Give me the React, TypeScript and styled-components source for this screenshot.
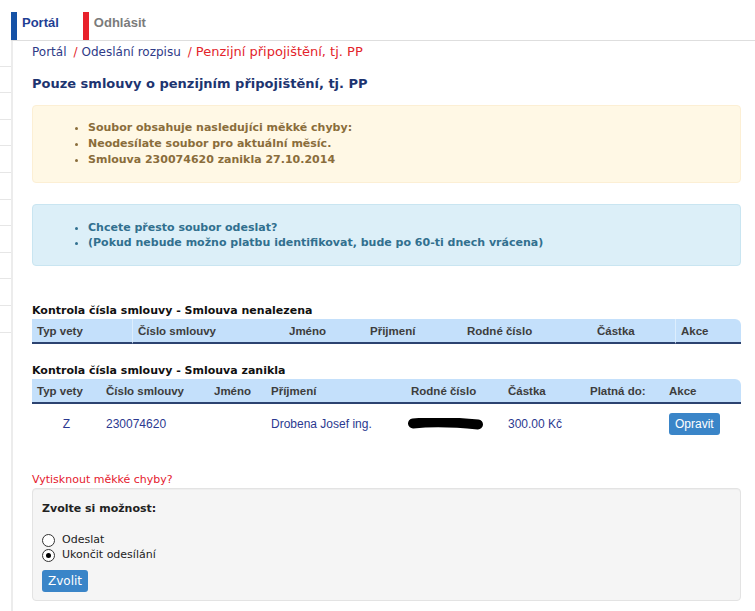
import React from "react";
import styled, { createGlobalStyle } from "styled-components";

const GlobalStyle = createGlobalStyle`
  html, body { margin: 0; padding: 0; background: #ffffff; }
  body {
    font-family: "DejaVu Sans", Verdana, sans-serif;
    font-size: 12px;
    color: #333333;
  }
  * { box-sizing: border-box; }
`;

const Page = styled.div`
  display: flex;
  min-height: 611px;
`;

const Sidebar = styled.aside`
  width: 11px;
  flex: none;
  padding-top: 40px;
  display: flex;
  flex-direction: column;
`;

const SideItem = styled.div`
  height: 26.6px;
  border-bottom: 1px solid #e6e6e6;
`;

const Main = styled.div`
  flex: 1;
  min-width: 0;
  display: flex;
  flex-direction: column;
`;

const TopNav = styled.nav`
  height: 41px;
  border-bottom: 1px solid #dedede;
  display: flex;
  align-items: flex-end;
`;

const Tab = styled.a<{ $bar: string; $color: string }>`
  height: 28px;
  border-left: 6px solid ${(p) => p.$bar};
  padding: 3px 24px 0 5px;
  font: bold 13px/15px "Liberation Sans", Arial, sans-serif;
  color: ${(p) => p.$color};
  text-decoration: none;
`;

const Content = styled.main`
  flex: 1;
  border-left: 2px solid #ececec;
  padding: 3px 14px 8px 19px;
`;

const Crumbs = styled.div`
  display: flex;
  align-items: baseline;
  height: 16px;
  line-height: 16px;
  white-space: nowrap;
`;

const Crumb = styled.a<{ $current?: boolean }>`
  font-size: ${(p) => (p.$current ? "13px" : "12px")};
  color: ${(p) => (p.$current ? "#e3242b" : "#2e3a87")};
  text-decoration: none;
  margin-right: 7px;
`;

const Slash = styled.span`
  color: #e3242b;
  margin-right: 4px;
`;

const Title = styled.h1`
  margin: 16px 0 13px;
  font-size: 13px;
  line-height: 16px;
  font-weight: bold;
  color: #1d3470;
`;

const Alert = styled.div<{ $bg: string; $border: string; $color: string; $lh: number; $pad: number }>`
  background: ${(p) => p.$bg};
  border: 1px solid ${(p) => p.$border};
  border-radius: 4px;
  padding: ${(p) => p.$pad}px 15px;
  margin-bottom: 21px;
  color: ${(p) => p.$color};
  font-size: 11px;
  font-weight: bold;
  line-height: ${(p) => p.$lh}px;
`;

const AlertList = styled.ul`
  margin: 0;
  padding-left: 40px;
`;

const SectionTitle = styled.h3<{ $top: number }>`
  margin: ${(p) => p.$top}px 0 1px;
  font-size: 11px;
  line-height: 14px;
  font-weight: bold;
  color: #111111;
`;

const Grid = styled.table`
  width: 100%;
  table-layout: fixed;
  border-collapse: separate;
  border-spacing: 0;
  font-family: "Liberation Sans", Arial, sans-serif;
  font-size: 12px;
`;

const Col = styled.col<{ $w: number }>`
  width: ${(p) => p.$w}px;
`;

const HeadCell = styled.th<{ $sep?: boolean }>`
  height: 25px;
  padding: 0 5px;
  background: #c4e0fb;
  border-bottom: 2px solid #2c4370;
  border-left: ${(p) => (p.$sep ? "1px solid #ddeefd" : "0")};
  text-align: left;
  font-size: 11.5px;
  font-weight: bold;
  color: #3d3d3d;
  white-space: nowrap;
  &:last-child {
    border-top-right-radius: 6px;
  }
`;

const Cell = styled.td<{ $center?: boolean }>`
  height: 40px;
  padding: 0 5px;
  color: #2b3990;
  text-align: ${(p) => (p.$center ? "center" : "left")};
  white-space: nowrap;
  vertical-align: middle;
`;

const Redacted = styled.svg`
  display: block;
  margin-left: -3px;
`;

const SmallButton = styled.button`
  height: 22px;
  padding: 0 6px;
  border: 0;
  border-radius: 3px;
  background: #3a85c8;
  color: #ffffff;
  font: 12px "Liberation Sans", Arial, sans-serif;
  cursor: pointer;
`;

const PrintLink = styled.a`
  display: block;
  margin-top: 30px;
  margin-bottom: 2px;
  font-size: 11px;
  line-height: 12px;
  color: #e5202e;
  text-decoration: none;
`;

const Well = styled.form`
  background: #f5f5f5;
  border: 1px solid #e3e3e3;
  border-radius: 4px;
  padding: 13px 9px 8px;
  box-shadow: inset 0 1px 1px rgba(0, 0, 0, 0.03);
`;

const WellTitle = styled.div`
  font-size: 11px;
  line-height: 14px;
  font-weight: bold;
  color: #222222;
`;

const Options = styled.div`
  margin-top: 16px;
  display: flex;
  flex-direction: column;
`;

const Option = styled.label`
  display: flex;
  align-items: center;
  height: 15px;
  font-size: 11px;
  color: #222222;
`;

const Radio = styled.input`
  appearance: none;
  width: 13px;
  height: 13px;
  margin: 2px 7px 0 0;
  border: 1px solid #333333;
  border-radius: 50%;
  background: #ffffff;
  display: grid;
  place-items: center;
  &:checked::after {
    content: "";
    width: 5px;
    height: 5px;
    border-radius: 50%;
    background: #000000;
  }
`;

const SubmitButton = styled.button`
  margin-top: 8px;
  height: 22px;
  padding: 0 6px;
  border: 0;
  border-radius: 3px;
  background: #3a85c8;
  color: #ffffff;
  font: 12px "DejaVu Sans", Verdana, sans-serif;
  cursor: pointer;
`;

const table1Cols = [
  { label: "Typ vety", w: 100 },
  { label: "Číslo smlouvy", w: 152, sep: true },
  { label: "Jméno", w: 81 },
  { label: "Přijmení", w: 97 },
  { label: "Rodné číslo", w: 130 },
  { label: "Částka", w: 83 },
  { label: "Akce", w: 66, sep: true },
];

const table2Cols = [
  { label: "Typ vety", w: 69 },
  { label: "Číslo smlouvy", w: 108 },
  { label: "Jméno", w: 57 },
  { label: "Příjmení", w: 140 },
  { label: "Rodné číslo", w: 97 },
  { label: "Částka", w: 82 },
  { label: "Platná do:", w: 79 },
  { label: "Akce", w: 77 },
];

export default function App() {
  return (
    <>
      <GlobalStyle />
      <Page>
        <Sidebar>
          {Array.from({ length: 11 }).map((_, i) => (
            <SideItem key={i} />
          ))}
        </Sidebar>
        <Main>
          <TopNav>
            <Tab $bar="#1552a6" $color="#1f3f94" href="#">
              Portál
            </Tab>
            <Tab $bar="#e8212b" $color="#7b7b7b" href="#">
              Odhlásit
            </Tab>
          </TopNav>
          <Content>
            <Crumbs>
              <Crumb href="#">Portál</Crumb>
              <Slash>/</Slash>
              <Crumb href="#">Odeslání rozpisu</Crumb>
              <Slash>/</Slash>
              <Crumb $current>Penzijní připojištění, tj. PP</Crumb>
            </Crumbs>
            <Title>Pouze smlouvy o penzijním připojištění, tj. PP</Title>

            <Alert $bg="#fff8e5" $border="#fcefd4" $color="#8a6d3b" $lh={16} $pad={14}>
              <AlertList>
                <li>Soubor obsahuje nasledujíci měkké chyby:</li>
                <li>Neodesílate soubor pro aktuální měsíc.</li>
                <li>Smlouva 230074620 zanikla 27.10.2014</li>
              </AlertList>
            </Alert>

            <Alert $bg="#dceff8" $border="#c9e5f1" $color="#31708f" $lh={15} $pad={15}>
              <AlertList>
                <li>Chcete přesto soubor odeslat?</li>
                <li>(Pokud nebude možno platbu identifikovat, bude po 60-ti dnech vrácena)</li>
              </AlertList>
            </Alert>

            <SectionTitle $top={38}>Kontrola čísla smlouvy - Smlouva nenalezena</SectionTitle>
            <Grid>
              <colgroup>
                {table1Cols.map((c) => (
                  <Col key={c.label} $w={c.w} />
                ))}
              </colgroup>
              <thead>
                <tr>
                  {table1Cols.map((c) => (
                    <HeadCell key={c.label} $sep={c.sep}>
                      {c.label}
                    </HeadCell>
                  ))}
                </tr>
              </thead>
            </Grid>

            <SectionTitle $top={20}>Kontrola čísla smlouvy - Smlouva zanikla</SectionTitle>
            <Grid>
              <colgroup>
                {table2Cols.map((c) => (
                  <Col key={c.label} $w={c.w} />
                ))}
              </colgroup>
              <thead>
                <tr>
                  {table2Cols.map((c) => (
                    <HeadCell key={c.label}>{c.label}</HeadCell>
                  ))}
                </tr>
              </thead>
              <tbody>
                <tr>
                  <Cell $center>Z</Cell>
                  <Cell>230074620</Cell>
                  <Cell />
                  <Cell>Drobena Josef ing.</Cell>
                  <Cell>
                    <Redacted width="76" height="12" viewBox="0 0 76 12">
                      <path
                        d="M5 5.5 C 20 4, 45 4, 70 6.5"
                        stroke="#000"
                        strokeWidth="10"
                        strokeLinecap="round"
                        fill="none"
                      />
                    </Redacted>
                  </Cell>
                  <Cell>300.00 Kč</Cell>
                  <Cell />
                  <Cell>
                    <SmallButton type="button">Opravit</SmallButton>
                  </Cell>
                </tr>
              </tbody>
            </Grid>

            <PrintLink href="#">Vytisknout měkké chyby?</PrintLink>
            <Well onSubmit={(e) => e.preventDefault()}>
              <WellTitle>Zvolte si možnost:</WellTitle>
              <Options>
                <Option>
                  <Radio type="radio" name="volba" value="odeslat" />
                  Odeslat
                </Option>
                <Option>
                  <Radio type="radio" name="volba" value="ukoncit" defaultChecked />
                  Ukončit odesílání
                </Option>
              </Options>
              <SubmitButton type="submit">Zvolit</SubmitButton>
            </Well>
          </Content>
        </Main>
      </Page>
    </>
  );
}
